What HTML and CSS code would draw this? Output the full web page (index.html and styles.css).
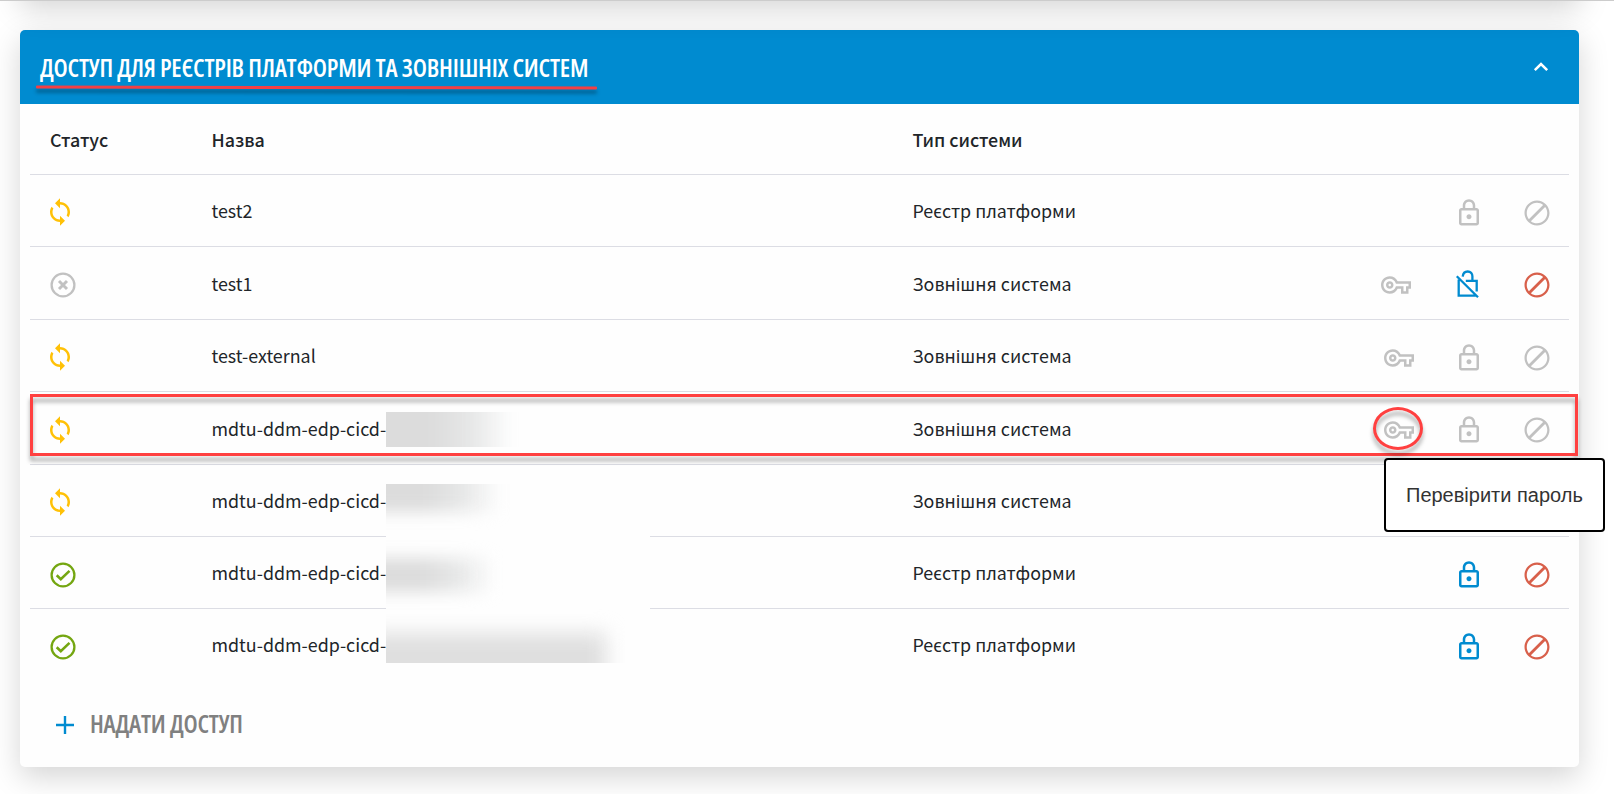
FILE: index.html
```
<!DOCTYPE html>
<html lang="uk">
<head>
<meta charset="utf-8">
<title>Доступ для реєстрів платформи та зовнішніх систем</title>
<link rel="stylesheet" href="styles.css">
</head>
<body>
<svg class="sprite" aria-hidden="true">
  <symbol id="sync" viewBox="0 0 24 24"><path d="M12 4V1L8 5l4 4V6c3.31 0 6 2.69 6 6 0 1.01-.25 1.97-.7 2.8l1.46 1.46C19.54 15.03 20 13.57 20 12c0-4.42-3.58-8-8-8zm0 14c-3.31 0-6-2.69-6-6 0-1.01.25-1.97.7-2.8L5.24 7.74C4.46 8.97 4 10.43 4 12c0 4.42 3.58 8 8 8v3l4-4-4-4v3z"/></symbol>
  <symbol id="key" viewBox="0 0 24 24"><path d="M22 19h-6v-4h-2.68c-1.14 2.42-3.6 4-6.32 4-3.86 0-7-3.14-7-7s3.14-7 7-7c2.72 0 5.17 1.58 6.32 4H24v6h-2v4zm-4-2h2v-4h2v-2H11.94l-.23-.67C11.01 8.34 9.11 7 7 7c-2.76 0-5 2.24-5 5s2.24 5 5 5c2.11 0 4.01-1.34 4.71-3.33l.23-.67H18v4zM7 15c-1.65 0-3-1.35-3-3s1.35-3 3-3 3 1.35 3 3-1.35 3-3 3zm0-4c-.55 0-1 .45-1 1s.45 1 1 1 1-.45 1-1-.45-1-1-1z"/></symbol>
  <symbol id="lock" viewBox="0 0 24 24"><path d="M18 8h-1V6c0-2.76-2.24-5-5-5S7 3.240 7 6v2H6c-1.100 0-2 .9-2 2v10c0 1.100.9 2 2 2h12c1.100 0 2-.9 2-2V10c0-1.100-.9-2-2-2zM9 6c0-1.660 1.340-3 3-3s3 1.340 3 3v2H9V6zm9 14H6V10h12v10zm-6-3c1.100 0 2-.9 2-2s-.9-2-2-2-2 .9-2 2 .9 2 2 2z"/></symbol>
  <symbol id="unlock" viewBox="0 0 30 30"><g fill="none" stroke="currentColor" stroke-width="2.300"><path d="M4.800 7.200L26 28.200M6.700 10.500V26.700H24M13.800 11.900H24.700V22.500M10.700 7.600C11 4.600 13 2.500 15.700 2.500C18.600 2.500 20.400 4.600 20.400 7.300V11.500"/></g></symbol>
  <symbol id="ban" viewBox="0 0 24 24"><path d="M12 2C6.480 2 2 6.480 2 12s4.480 10 10 10 10-4.480 10-10S17.520 2 12 2zM3.800 12c0-4.500 3.700-8.200 8.200-8.200 1.900 0 3.600.6 4.900 1.700L5.500 16.900C4.400 15.600 3.800 13.900 3.800 12zm8.200 8.200c-1.900 0-3.600-.6-4.900-1.700L18.500 7.100c1.100 1.300 1.700 3 1.700 4.900 0 4.500-3.700 8.200-8.200 8.200z"/></symbol>
  <symbol id="cross" viewBox="0 0 30 30"><g fill="none" stroke="currentColor" stroke-width="2.300"><circle cx="15" cy="15" r="11.400"/><path stroke-width="3" d="M11 11l8 8M19 11l-8 8"/></g></symbol>
  <symbol id="check" viewBox="0 0 30 30"><g fill="none" stroke="currentColor" stroke-width="2.300"><circle cx="15" cy="15" r="11.400"/><path stroke-width="2.600" d="M8.700 15.200l4.100 4 8.700-8.300"/></g></symbol>
  <symbol id="plus" viewBox="0 0 18 18"><path d="M7.800 0h2.400v7.800H18v2.400h-7.800V18H7.800v-7.800H0V7.800h7.800z"/></symbol>
</svg>

<div class="previous-card"></div>
<main class="card">
  <header class="card-header">
    <h1 class="title">ДОСТУП ДЛЯ РЕЄСТРІВ ПЛАТФОРМИ ТА ЗОВНІШНІХ СИСТЕМ</h1>
    <svg class="chevron" viewBox="0 0 16 11"><path d="M1.800 9.200L8 3l6.200 6.200" fill="none" stroke="currentColor" stroke-width="2.500"/></svg>
  </header>
  <section class="table">
    <div class="row head"><span>Статус</span><span>Назва</span><span>Тип системи</span></div>
    <div class="row">
      <svg class="icon yellow sync"><use href="#sync"/></svg><span>test2</span><span>Реєстр платформи</span>
      <div class="actions"><svg class="icon"><use href="#lock"/></svg><svg class="icon"><use href="#ban"/></svg></div>
    </div>
    <div class="row tall">
      <svg class="icon"><use href="#cross"/></svg><span>test1</span><span>Зовнішня система</span>
      <div class="actions"><svg class="icon key"><use href="#key"/></svg><svg class="icon blue open"><use href="#unlock"/></svg><svg class="icon red"><use href="#ban"/></svg></div>
    </div>
    <div class="row">
      <svg class="icon yellow sync"><use href="#sync"/></svg><span>test-external</span><span>Зовнішня система</span>
      <div class="actions"><svg class="icon key"><use href="#key"/></svg><svg class="icon"><use href="#lock"/></svg><svg class="icon"><use href="#ban"/></svg></div>
    </div>
    <div class="row tall">
      <svg class="icon yellow sync"><use href="#sync"/></svg><span>mdtu-ddm-edp-cicd-</span><span>Зовнішня система</span>
      <div class="actions"><svg class="icon key"><use href="#key"/></svg><svg class="icon"><use href="#lock"/></svg><svg class="icon"><use href="#ban"/></svg></div>
    </div>
    <div class="row">
      <svg class="icon yellow sync"><use href="#sync"/></svg><span>mdtu-ddm-edp-cicd-</span><span>Зовнішня система</span>
    </div>
    <div class="row">
      <svg class="icon green"><use href="#check"/></svg><span>mdtu-ddm-edp-cicd-</span><span>Реєстр платформи</span>
      <div class="actions"><svg class="icon blue"><use href="#lock"/></svg><svg class="icon red"><use href="#ban"/></svg></div>
    </div>
    <div class="row last">
      <svg class="icon green"><use href="#check"/></svg><span>mdtu-ddm-edp-cicd-</span><span>Реєстр платформи</span>
      <div class="actions"><svg class="icon blue"><use href="#lock"/></svg><svg class="icon red"><use href="#ban"/></svg></div>
    </div>
  </section>
  <button class="add"><svg class="plus"><use href="#plus"/></svg><span>НАДАТИ ДОСТУП</span></button>
</main>

<div class="mask mask-single"><i class="smudge s1"></i></div>
<div class="mask mask-group"><i class="smudge s2"></i><i class="smudge s3"></i><i class="smudge s4"></i></div>
<div class="mark underline"></div>
<div class="mark frame"></div>
<div class="mark ring"></div>
<div class="tooltip">Перевірити пароль</div>
</body>
</html>
```
FILE: styles.css
```
* { box-sizing: border-box; }

body {
  position: relative;
  width: 1614px;
  height: 794px;
  margin: 0;
  overflow: hidden;
  border-top: 1px solid #ccc;
  background: #fff;
  color: #212529;
  font: 17.88px/26px "Noto Sans CJK SC", "Noto Sans", sans-serif;
}

.sprite { position: absolute; width: 0; height: 0; }

.previous-card,
.card { box-shadow: 0 10px 30px rgba(0, 0, 0, .17); }

.previous-card {
  position: absolute;
  left: 20px;
  top: -101px;
  width: 1559px;
  height: 99px;
  border-radius: 5px;
}

.card {
  width: 1559px;
  height: 737px;
  margin: 29px 0 0 20px;
  overflow: hidden;
  border-radius: 5px;
  background: #fefefe;
}

.card-header {
  display: flex;
  align-items: center;
  justify-content: space-between;
  height: 74px;
  padding: 0 30.500px 0 20px;
  background: #008bd0;
  color: #fff;
}

.title,
.add {
  font-family: "Open Sans", sans-serif;
  font-stretch: 75%;
  font-size: 25px;
  font-weight: 600;
  line-height: 34px;
  white-space: nowrap;
}

.title { margin: 0; font-weight: 650; letter-spacing: -.22px; }
.chevron { width: 16px; height: 11px; margin-bottom: 1px; }

.table { padding: 0 10px; }

.row {
  display: grid;
  grid-template-columns: 161.500px 701px 1fr auto;
  align-items: center;
  height: 72px;
  padding: 1px 17.500px 0 20px;
  border-bottom: 1px solid #dcdde4;
}

.row span { margin-top: -3px; }
.row.head { height: 71px; font-weight: 500; }
.row.head span { margin-top: -1px; }
.row.tall { height: 73px; }
.row.tall span { margin-top: -2px; }
.row.last { border: 0; padding-top: 0; }
.row.last span { margin-top: -2px; }

.actions { display: flex; gap: 37.500px; }

.icon {
  width: 30px;
  height: 30px;
  margin: 4px 0 0 -2.500px;
  fill: currentColor;
  color: #c1c1c1;
}

.row.tall .icon { margin-top: 3px; }
.row .sync,
.row.tall .sync { margin: 2px 0 0 -5px; }
.actions .icon { margin-left: 0; }
.actions .key { margin-right: 2.500px; }
.row.tall .open { margin: 2px 2.500px 0 1px; }

.yellow { color: #ffc107; }
.green { color: #74a611; }
.actions .blue { color: #008bd0; }
.actions .red { color: #d8604b; }

.add {
  display: flex;
  align-items: center;
  gap: 16px;
  margin: 29px 0 0 36px;
  padding: 0;
  border: 0;
  background: none;
  color: #808080;
  letter-spacing: -.22px;
}

.add span { margin-top: -4px; }
.plus { width: 18px; height: 18px; fill: #008bd0; }

/* Redacted name endings */
.mask { position: absolute; left: 386px; overflow: hidden; background: #fefefe; }
.mask-single { top: 411px; width: 140px; height: 35px; }
.mask-group { top: 483px; width: 264px; height: 179px; }
.smudge {
  position: absolute;
  left: -20px;
  background: linear-gradient(90deg, #dcdcdc 45%, #e8e9e9 75%, rgba(240, 241, 241, 0));
  filter: blur(8px);
}
.s1 { top: -24px; width: 146px; height: 84px; }
.s2 { top: -22px; width: 134px; height: 50px; }
.s3 { top: 74px; width: 128px; height: 34px; }
.s4 { top: 149px; width: 240px; height: 70px; background: #dfdfdf; filter: blur(10px); }

/* Red annotation marks */
.mark { position: absolute; }

.underline {
  left: 36px;
  top: 85px;
  width: 561px;
  height: 3px;
  border-radius: 1px;
  background: #f43f44;
  box-shadow: 0 4px 4px rgba(0, 0, 0, .35);
  transform: rotate(.1deg);
}

.frame {
  left: 30px;
  top: 393px;
  width: 1548px;
  height: 62px;
  border: 3px solid #ff4040;
  filter: drop-shadow(0 5px 2px rgba(0, 0, 0, .35));
}

.ring {
  left: 1373px;
  top: 406px;
  width: 50px;
  height: 43px;
  border: 3px solid #ff4040;
  border-radius: 50%;
  filter: drop-shadow(0 5px 2px rgba(0, 0, 0, .35));
}

.tooltip {
  position: absolute;
  left: 1384px;
  top: 457px;
  width: 221px;
  height: 74px;
  padding: 22px 20px;
  border: 2px solid #000;
  border-radius: 4px;
  background: #fff;
  color: #333;
  font: 20px/26px "Liberation Sans", Arial, sans-serif;
  white-space: nowrap;
}
```
